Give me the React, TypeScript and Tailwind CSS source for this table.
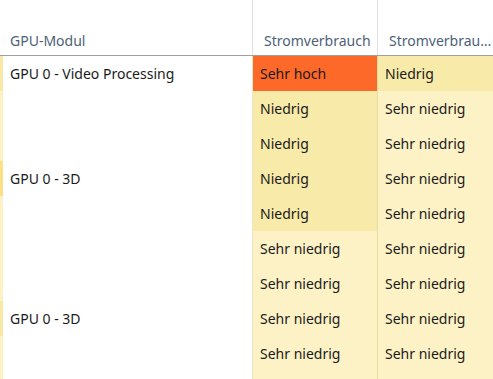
import React from "react";

type Level = "Sehr hoch" | "Niedrig" | "Sehr niedrig";

const cellBg: Record<Level, string> = {
  "Sehr hoch": "bg-[#fd6928]",
  Niedrig: "bg-[#f8eaa8]",
  "Sehr niedrig": "bg-[#fdf2c6]",
};

const rows: { name: string; strip: string; a: Level; b: Level }[] = [
  { name: "GPU 0 - Video Processing", strip: "bg-[#f9e7a4]", a: "Sehr hoch", b: "Niedrig" },
  { name: "", strip: "bg-[#fdf1c4]", a: "Niedrig", b: "Sehr niedrig" },
  { name: "", strip: "bg-[#fdf1c4]", a: "Niedrig", b: "Sehr niedrig" },
  { name: "GPU 0 - 3D", strip: "bg-[#fddf86]", a: "Niedrig", b: "Sehr niedrig" },
  { name: "", strip: "bg-[#fdf1c4]", a: "Niedrig", b: "Sehr niedrig" },
  { name: "", strip: "bg-[#fdf1c4]", a: "Sehr niedrig", b: "Sehr niedrig" },
  { name: "", strip: "bg-[#fdf1c4]", a: "Sehr niedrig", b: "Sehr niedrig" },
  { name: "GPU 0 - 3D", strip: "bg-[#f9e7a4]", a: "Sehr niedrig", b: "Sehr niedrig" },
  { name: "", strip: "bg-[#fdf1c4]", a: "Sehr niedrig", b: "Sehr niedrig" },
  { name: "", strip: "bg-[#fdf1c4]", a: "Sehr niedrig", b: "Sehr niedrig" },
];

export default function App() {
  return (
    <div
      className="w-[493px] h-[379px] overflow-hidden bg-white text-[14px] text-[#1a1a1a]"
      style={{ fontFamily: '"Noto Sans", "Open Sans", sans-serif' }}
    >
      <div className="w-[498px]">
        {/* column headers */}
        <div className="grid grid-cols-[253px_125px_120px] h-[56px] border-b border-[#a0a0a0] text-[#4d5f78]">
          <div className="flex items-end pb-[4px] pl-[10px] border-r border-[#e0e0e0]">GPU-Modul</div>
          <div className="flex items-end pb-[4px] pl-[11px] border-r border-[#e0e0e0]">Stromverbrauch</div>
          <div className="flex items-end pb-[4px] pl-[11px] min-w-0">
            <span className="block truncate">Stromverbrauch Trend</span>
          </div>
        </div>

        {/* data rows */}
        {rows.map((r, i) => (
          <div key={i} className="grid grid-cols-[253px_125px_120px] h-[35px]">
            <div className="flex items-center border-r border-[#ede4c4]">
              <div className={`w-[3px] h-full ${r.strip}`} />
              <span className="pl-[7px]">{r.name}</span>
            </div>
            <div className={`flex items-center pl-[7px] border-r border-[#eadb9e] ${cellBg[r.a]}`}>{r.a}</div>
            <div className={`flex items-center pl-[7px] ${cellBg[r.b]}`}>{r.b}</div>
          </div>
        ))}
      </div>
    </div>
  );
}
